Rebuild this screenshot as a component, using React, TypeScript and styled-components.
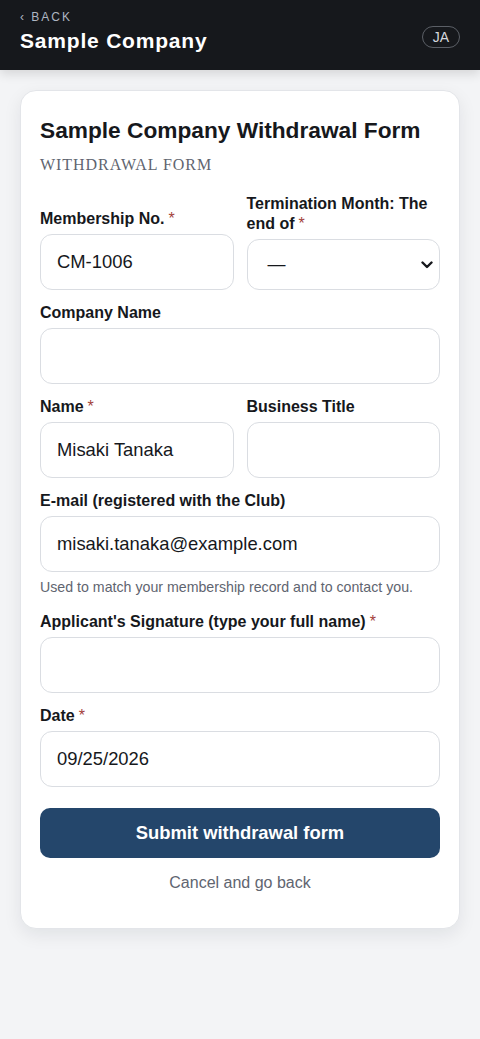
import React from "react";
import styled, { createGlobalStyle } from "styled-components";

const Global = createGlobalStyle`
  * { box-sizing: border-box; }
  html, body { margin: 0; padding: 0; }
  body {
    background: #f3f4f6;
    font-family: "Liberation Sans", Arial, sans-serif;
    color: #16181c;
  }
`;

const Header = styled.header`
  height: 70px;
  background: #16181c;
  padding: 10px 20px 0 20px;
  display: flex;
  align-items: flex-start;
  justify-content: space-between;
  box-shadow: 0 4px 10px rgba(0, 0, 0, 0.12);
  position: relative;
  z-index: 1;
`;

const HeaderText = styled.div`
  display: flex;
  flex-direction: column;
`;

const Back = styled.a`
  font-size: 12px;
  line-height: 14px;
  letter-spacing: 2px;
  color: #aeb6c2;
  text-decoration: none;
`;

const Brand = styled.h1`
  margin: 4px 0 0 0;
  font-size: 21px;
  line-height: 26px;
  font-weight: 700;
  letter-spacing: 0.8px;
  color: #ffffff;
`;

const LangPill = styled.button`
  margin-top: 16px;
  width: 38px;
  height: 22px;
  border: 1px solid #5b5f66;
  border-radius: 11px;
  background: transparent;
  color: #d4d7dc;
  font-family: "Liberation Sans", Arial, sans-serif;
  font-size: 14px;
  padding: 0;
  display: flex;
  align-items: center;
  justify-content: center;
`;

const Main = styled.main`
  padding: 20px 20px 110px 20px;
`;

const Card = styled.section`
  background: #ffffff;
  border: 1px solid #e3e5e9;
  border-radius: 16px;
  box-shadow: 0 6px 18px rgba(17, 24, 39, 0.08);
  padding: 25px 19px 35px 19px;
`;

const Title = styled.h2`
  margin: 0;
  font-size: 22.7px;
  line-height: 28px;
  font-weight: 700;
  color: #16181c;
`;

const Subtitle = styled.p`
  margin: 11px 0 0 0;
  font-family: "Liberation Serif", "Times New Roman", serif;
  font-size: 16px;
  line-height: 20px;
  letter-spacing: 0.06em;
  color: #5f6570;
`;

const Form = styled.form`
  margin-top: 19px;
  display: flex;
  flex-direction: column;
  gap: 13px;
`;

const Row = styled.div`
  display: grid;
  grid-template-columns: 1fr 1fr;
  column-gap: 13px;
  align-items: end;
`;

const Field = styled.div`
  display: flex;
  flex-direction: column;
`;

const Label = styled.label`
  font-size: 16px;
  line-height: 20px;
  font-weight: 700;
  color: #16181c;
  margin-bottom: 5px;
`;

const Req = styled.span`
  color: #a3413a;
  font-weight: 400;
  margin-left: 4px;
`;

const Input = styled.input`
  width: 100%;
  height: 56px;
  border: 1px solid #dadde2;
  border-radius: 12px;
  padding: 0 16px;
  font-family: "Liberation Sans", Arial, sans-serif;
  font-size: 18.4px;
  color: #16181c;
  background: #ffffff;
  outline: none;
`;

const SelectWrap = styled.div`
  height: 51px;
  border: 1px solid #dadde2;
  border-radius: 12px;
  background: #ffffff;
  display: flex;
  align-items: center;
  padding: 0 6px 0 20px;
  justify-content: space-between;
`;

const SelectValue = styled.span`
  font-size: 18px;
  color: #16181c;
`;

const Hint = styled.p`
  margin: 6px 0 3px 0;
  font-size: 14.2px;
  line-height: 18px;
  color: #5f6570;
`;

const Submit = styled.button`
  margin-top: 8px;
  height: 50px;
  width: 100%;
  border: none;
  border-radius: 10px;
  background: #24466b;
  color: #ffffff;
  font-family: "Liberation Sans", Arial, sans-serif;
  font-size: 18.4px;
  font-weight: 700;
`;

const Cancel = styled.a`
  display: block;
  text-align: center;
  margin-top: 2px;
  font-size: 16px;
  line-height: 20px;
  color: #5f6570;
  text-decoration: none;
`;

const Chevron = () => (
  <svg width="12" height="8" viewBox="0 0 12 8" aria-hidden="true">
    <path d="M1.5 1.5 L6 6 L10.5 1.5" fill="none" stroke="#16181c" strokeWidth="2.4" strokeLinecap="round" strokeLinejoin="round" />
  </svg>
);

export default function App() {
  return (
    <>
      <Global />
      <Header>
        <HeaderText>
          <Back href="#">‹ BACK</Back>
          <Brand>Sample Company</Brand>
        </HeaderText>
        <LangPill type="button">JA</LangPill>
      </Header>
      <Main>
        <Card>
          <Title>Sample Company Withdrawal Form</Title>
          <Subtitle>WITHDRAWAL FORM</Subtitle>
          <Form onSubmit={(e) => e.preventDefault()}>
            <Row>
              <Field>
                <Label>
                  Membership No.<Req>*</Req>
                </Label>
                <Input defaultValue="CM-1006" />
              </Field>
              <Field>
                <Label>
                  Termination Month: The end of<Req>*</Req>
                </Label>
                <SelectWrap>
                  <SelectValue>—</SelectValue>
                  <Chevron />
                </SelectWrap>
              </Field>
            </Row>
            <Field>
              <Label>Company Name</Label>
              <Input />
            </Field>
            <Row>
              <Field>
                <Label>
                  Name<Req>*</Req>
                </Label>
                <Input defaultValue="Misaki Tanaka" />
              </Field>
              <Field>
                <Label>Business Title</Label>
                <Input />
              </Field>
            </Row>
            <Field>
              <Label>E-mail (registered with the Club)</Label>
              <Input defaultValue="misaki.tanaka@example.com" />
              <Hint>Used to match your membership record and to contact you.</Hint>
            </Field>
            <Field>
              <Label>
                Applicant's Signature (type your full name)<Req>*</Req>
              </Label>
              <Input />
            </Field>
            <Field>
              <Label>
                Date<Req>*</Req>
              </Label>
              <Input defaultValue="09/25/2026" />
            </Field>
            <Submit type="submit">Submit withdrawal form</Submit>
            <Cancel href="#">Cancel and go back</Cancel>
          </Form>
        </Card>
      </Main>
    </>
  );
}
